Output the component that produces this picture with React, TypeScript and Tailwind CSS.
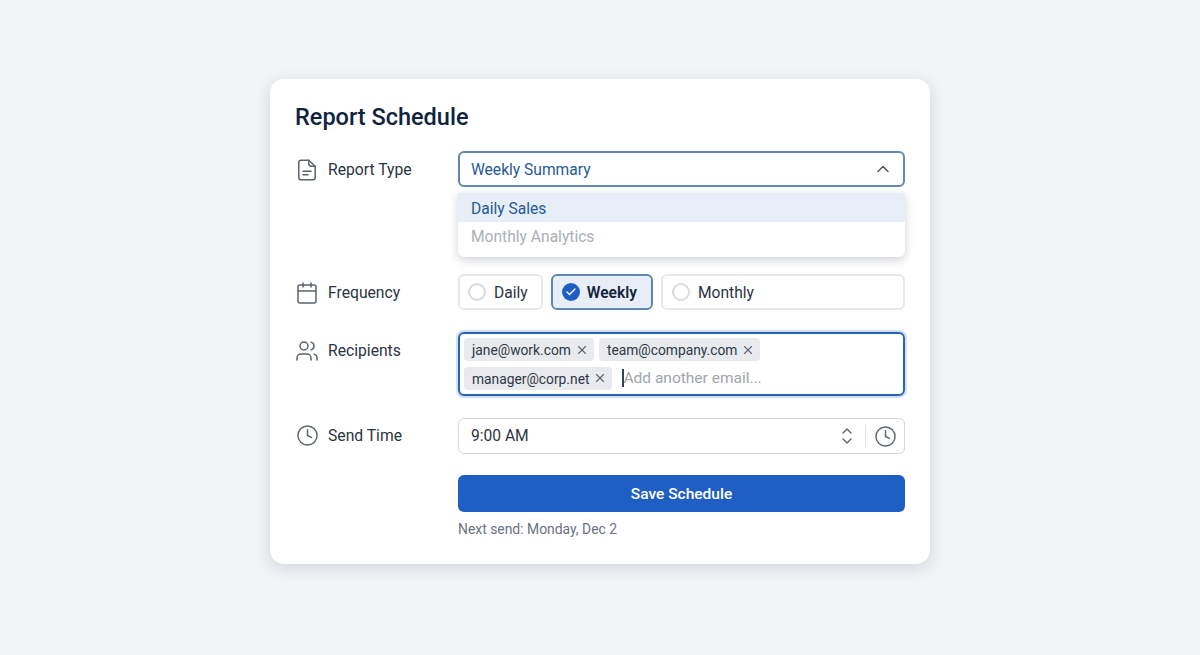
import React from 'react';
import { Calendar, Check, ChevronDown, ChevronUp, Clock, Users, X } from 'lucide-react';

function DocIcon() {
  return (
    <svg width="24" height="24" viewBox="0 0 24 24" fill="none" stroke="#5b6472" strokeWidth="1.5" strokeLinecap="round" strokeLinejoin="round">
      <path d="M13.8 2.2H6.2A2.4 2.4 0 0 0 3.8 4.6v14.8a2.4 2.4 0 0 0 2.4 2.4h11.6a2.4 2.4 0 0 0 2.4-2.4V8.2z" />
      <path d="M13.8 2.2v3.6a2.4 2.4 0 0 0 2.4 2.4h4" />
      <path d="M8 13.2h8" />
      <path d="M8 16.8h5" />
    </svg>
  );
}

function Label({ icon, text }: { icon: React.ReactNode; text: string }) {
  return (
    <div className="flex w-[163px] shrink-0 items-center text-[15.7px] leading-[24px] text-[#2b3441]">
      <span className="flex w-[33px] shrink-0 justify-center pr-[9px]">{icon}</span>
      <span>{text}</span>
    </div>
  );
}

function Radio({ label, pl }: { label: string; pl: string }) {
  return (
    <div className={`flex h-[36px] items-center rounded-[6px] border-2 border-[#e6e8eb] bg-white pr-[13px] text-[15.6px] leading-[24px] text-[#2b3441] ${pl}`}>
      <span className="mr-[8px] h-[18px] w-[18px] rounded-full border-2 border-[#d9dbde] bg-white" />
      <span className="pt-[1px]">{label}</span>
    </div>
  );
}

function Tag({ email }: { email: string }) {
  return (
    <span className="flex h-[23px] items-center rounded-[4px] bg-[#e8eaee] pl-[8px] pr-[5px] text-[13.8px] leading-[20px] text-[#2f3845]">
      <span className="pt-[1px]">{email}</span>
      <X size={14} strokeWidth={1.9} className="ml-[4px] text-[#5b6472]" />
    </span>
  );
}

export default function App() {
  return (
    <div className="flex h-[655px] justify-center bg-[#f2f4f7] pt-[79px] font-['Roboto',sans-serif]">
      <div className="h-[485px] w-[660px] rounded-[14px] bg-white px-[25px] pt-[21px] shadow-[0_4px_16px_rgba(40,50,70,0.16)]">
        <h1 className="h-[34px] text-[23.5px] font-medium leading-[34px] text-[#0f2340]">Report Schedule</h1>

        <div className="mt-[17px] flex items-start">
          <div className="flex h-[36px] items-center pt-[1px]">
            <Label icon={<DocIcon />} text="Report Type" />
          </div>
          <div className="flex-1">
            <div className="flex h-[36px] items-center justify-between rounded-[6px] border-2 border-[#6088b3] pl-[11px] pr-[10px] text-[15.6px] leading-[24px] text-[#1f5a96]">
              <span className="pt-[1px]">Weekly Summary</span>
              <ChevronUp size={20} strokeWidth={1.8} className="text-[#4b5563]" />
            </div>
            <div className="mt-[6px] overflow-hidden rounded-b-[6px] bg-white text-[15.6px] leading-[24px] shadow-[0_3px_10px_rgba(40,50,70,0.22)]">
              <div className="flex h-[29px] items-center bg-[#e8eef8] pl-[13px] pt-[2px] text-[#1f5a96]">Daily Sales</div>
              <div className="flex h-[35px] items-start pl-[13px] pt-[3px] text-[#acb0b6]">Monthly Analytics</div>
            </div>
          </div>
        </div>

        <div className="mt-[17px] flex items-center">
          <div className="pt-[1px]">
            <Label icon={<Calendar size={24} strokeWidth={1.5} className="text-[#5b6472]" />} text="Frequency" />
          </div>
          <div className="flex flex-1 gap-[8px]">
            <Radio label="Daily" pl="pl-[8px]" />
            <div className="flex h-[36px] items-center rounded-[6px] border-2 border-[#6088b3] bg-[#e8eef8] pl-[9px] pr-[14px] text-[15.6px] font-semibold leading-[24px] text-[#14233b]">
              <span className="mr-[7px] flex h-[18px] w-[18px] items-center justify-center rounded-full bg-[#1f5fc4]">
                <Check size={12} strokeWidth={2.6} className="text-white" />
              </span>
              <span className="pt-[1px]">Weekly</span>
            </div>
            <div className="flex-1">
              <Radio label="Monthly" pl="pl-[9px]" />
            </div>
          </div>
        </div>

        <div className="mt-[22px] flex items-start">
          <div className="flex h-[36px] items-center pt-[1px]">
            <Label icon={<Users size={24} strokeWidth={1.5} className="text-[#5b6472]" />} text="Recipients" />
          </div>
          <div className="h-[64px] flex-1 rounded-[6px] border-2 border-[#2a63ad] pl-[4px] pt-[4px] shadow-[0_0_0_2px_#cfe0f7]">
            <div className="flex gap-[5px]">
              <Tag email="jane@work.com" />
              <Tag email="team@company.com" />
            </div>
            <div className="mt-[5px] flex items-center">
              <Tag email="manager@corp.net" />
              <span className="ml-[10px] h-[18px] w-[2px] bg-[#2f4058]" />
              <span className="-ml-[1px] text-[15.5px] leading-[24px] text-[#a0a5ac]">Add another email...</span>
            </div>
          </div>
        </div>

        <div className="mt-[22px] flex items-center">
          <Label icon={<Clock size={23} strokeWidth={1.5} className="-mt-[1px] text-[#5b6472]" />} text="Send Time" />
          <div className="flex h-[36px] flex-1 items-center justify-between rounded-[6px] border border-[#d4d6da] pl-[12px] pr-[7px] text-[15.6px] leading-[24px] text-[#2b3441]">
            <span>9:00 AM</span>
            <div className="flex items-center">
              <div className="flex flex-col text-[#5b6472]">
                <ChevronUp size={16} strokeWidth={2} className="-mb-[3px]" />
                <ChevronDown size={16} strokeWidth={2} className="-mt-[3px]" />
              </div>
              <span className="ml-[10px] mr-[8px] h-[23px] w-px bg-[#dfe1e5]" />
              <Clock size={23} strokeWidth={1.5} className="text-[#5b6472]" />
            </div>
          </div>
        </div>

        <div className="ml-[163px] mt-[21px]">
          <button className="h-[37px] w-full rounded-[6px] bg-[#1f5fc4] text-[15.5px] font-medium leading-[24px] text-white">Save Schedule</button>
          <p className="mt-[9px] text-[13.9px] leading-[17px] text-[#6b7280]">Next send: Monday, Dec 2</p>
        </div>
      </div>
    </div>
  );
}
